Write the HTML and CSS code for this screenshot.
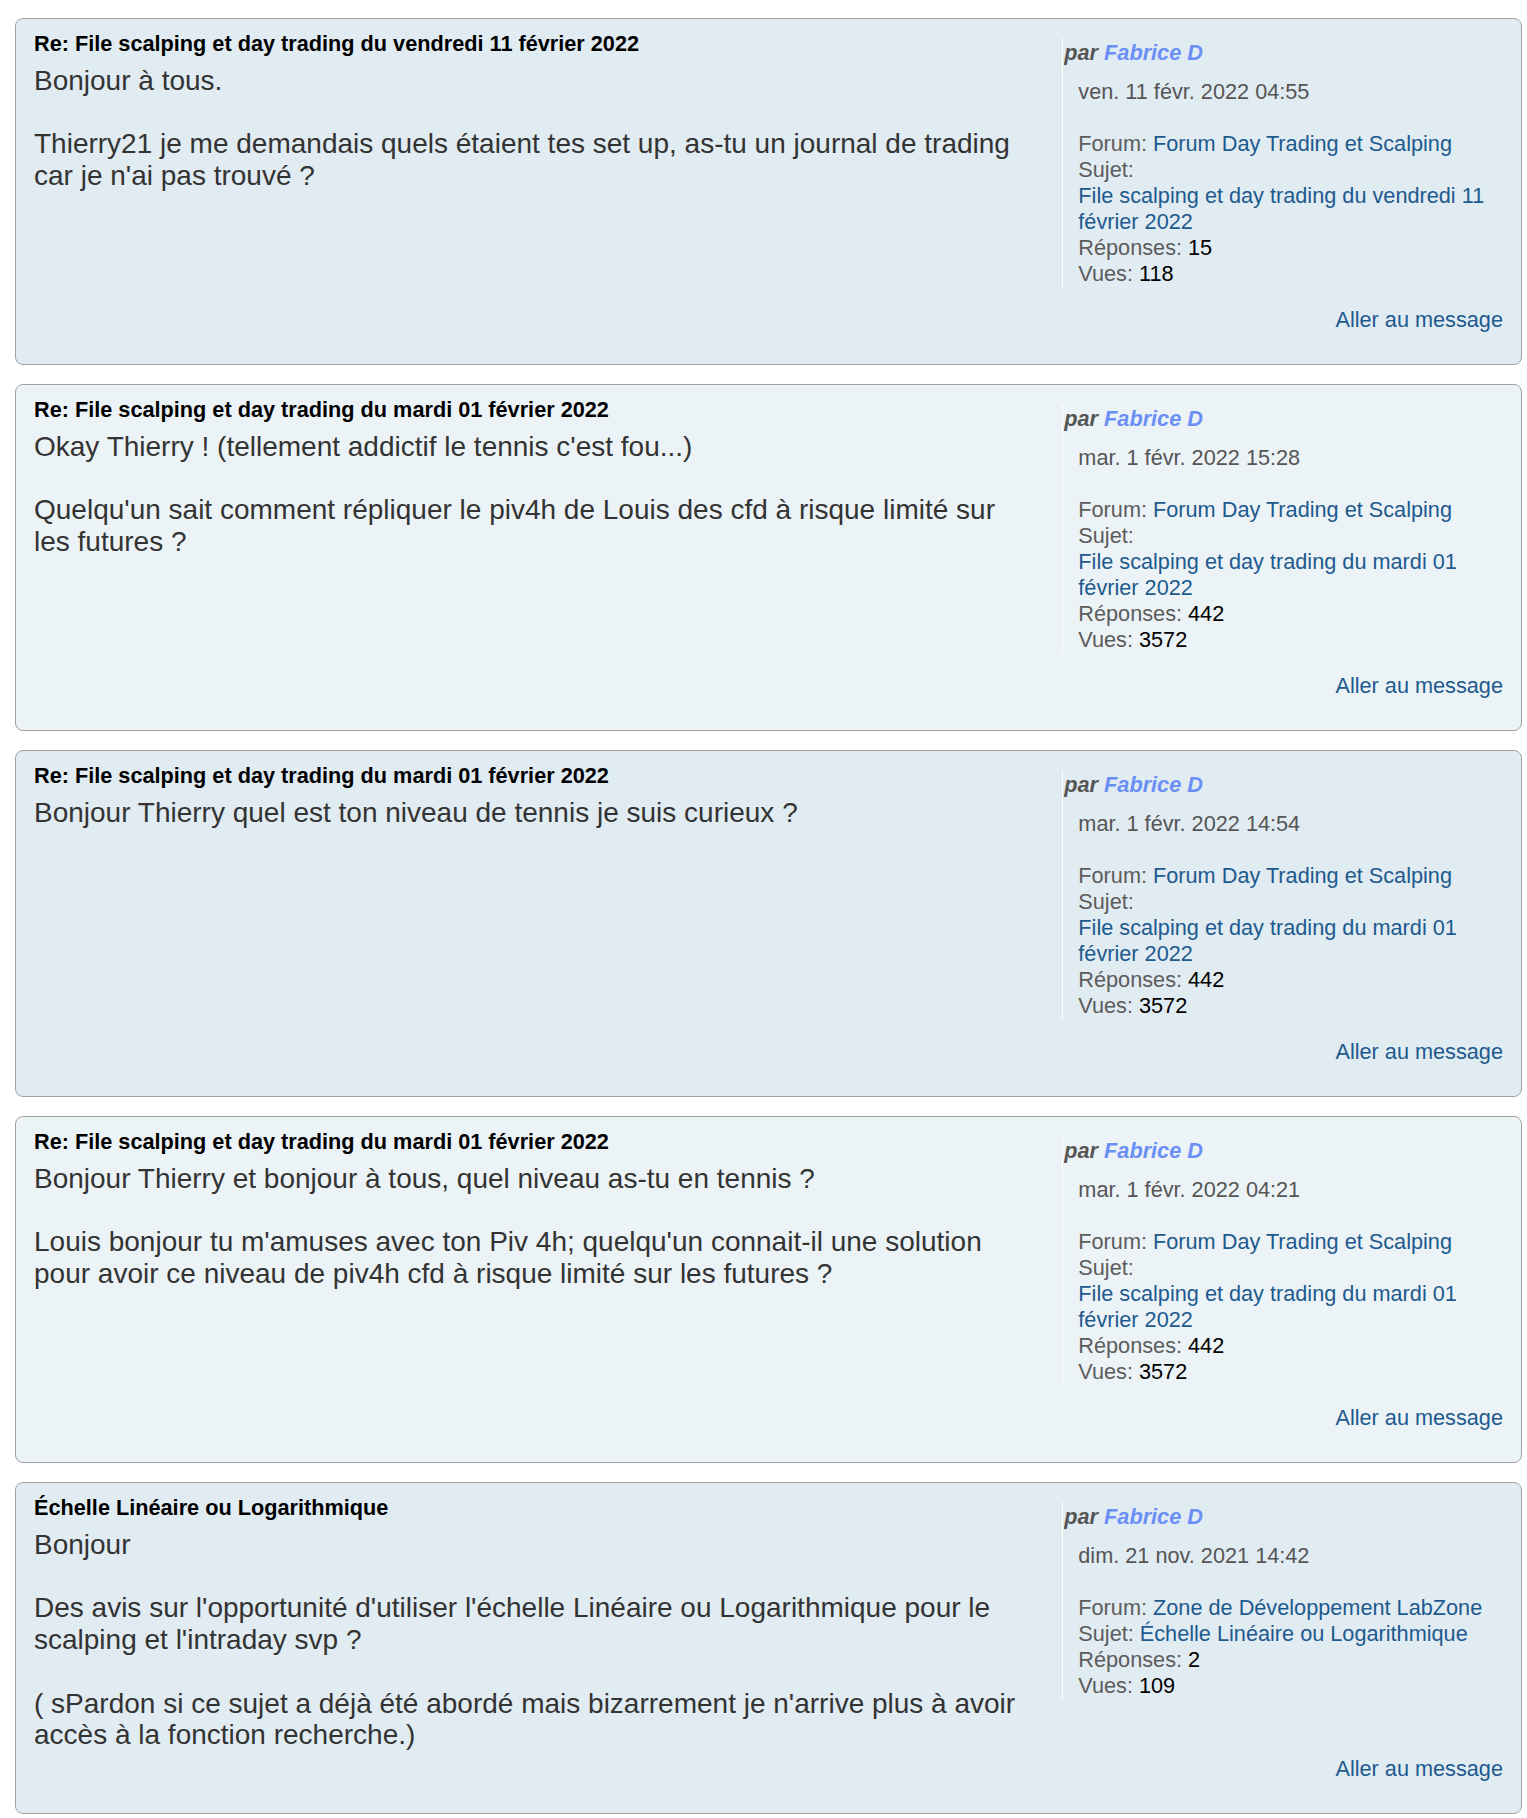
FILE: index.html
```html
<!DOCTYPE html>
<html lang="fr">

<head>
    <meta charset="UTF-8" />
    <title>Résultats de la recherche</title>
    <link rel="stylesheet" href="styles.css">
</head>

<body>
    <div class="results">

        <div class="post bg2">
            <div class="row">
                <div class="postbody">
                    <h3><a href="#">Re: File scalping et day trading du vendredi 11 février 2022</a></h3>
                    <div class="content">Bonjour à tous.<br><br>Thierry21 je me demandais quels étaient tes set up, as-tu un journal de trading car je n'ai pas trouvé ?</div>
                </div>
                <dl class="postprofile">
                    <dt class="author">par <a href="#" class="username">Fabrice D</a></dt>
                    <dd class="date">ven. 11 févr. 2022 04:55</dd>
                    <dd>&nbsp;</dd>
                    <dd>Forum: <a href="#">Forum Day Trading et Scalping</a></dd>
                    <dd>Sujet: <a href="#" class="topic">File scalping et day trading du vendredi 11 février 2022</a></dd>
                    <dd>Réponses: <strong>15</strong></dd>
                    <dd>Vues: <strong>118</strong></dd>
                </dl>
            </div>
            <div class="jump"><a href="#">Aller au message</a></div>
        </div>

        <div class="post bg1">
            <div class="row">
                <div class="postbody">
                    <h3><a href="#">Re: File scalping et day trading du mardi 01 février 2022</a></h3>
                    <div class="content">Okay Thierry ! (tellement addictif le tennis c'est fou...)<br><br>Quelqu'un sait comment répliquer le piv4h de Louis des cfd à risque limité sur les futures ?</div>
                </div>
                <dl class="postprofile">
                    <dt class="author">par <a href="#" class="username">Fabrice D</a></dt>
                    <dd class="date">mar. 1 févr. 2022 15:28</dd>
                    <dd>&nbsp;</dd>
                    <dd>Forum: <a href="#">Forum Day Trading et Scalping</a></dd>
                    <dd>Sujet: <a href="#" class="topic">File scalping et day trading du mardi 01 février 2022</a></dd>
                    <dd>Réponses: <strong>442</strong></dd>
                    <dd>Vues: <strong>3572</strong></dd>
                </dl>
            </div>
            <div class="jump"><a href="#">Aller au message</a></div>
        </div>

        <div class="post bg2">
            <div class="row">
                <div class="postbody">
                    <h3><a href="#">Re: File scalping et day trading du mardi 01 février 2022</a></h3>
                    <div class="content">Bonjour Thierry quel est ton niveau de tennis je suis curieux ?</div>
                </div>
                <dl class="postprofile">
                    <dt class="author">par <a href="#" class="username">Fabrice D</a></dt>
                    <dd class="date">mar. 1 févr. 2022 14:54</dd>
                    <dd>&nbsp;</dd>
                    <dd>Forum: <a href="#">Forum Day Trading et Scalping</a></dd>
                    <dd>Sujet: <a href="#" class="topic">File scalping et day trading du mardi 01 février 2022</a></dd>
                    <dd>Réponses: <strong>442</strong></dd>
                    <dd>Vues: <strong>3572</strong></dd>
                </dl>
            </div>
            <div class="jump"><a href="#">Aller au message</a></div>
        </div>

        <div class="post bg1">
            <div class="row">
                <div class="postbody">
                    <h3><a href="#">Re: File scalping et day trading du mardi 01 février 2022</a></h3>
                    <div class="content">Bonjour Thierry et bonjour à tous, quel niveau as-tu en tennis ?<br><br>Louis bonjour tu m'amuses avec ton Piv 4h; quelqu'un connait-il une solution pour avoir ce niveau de piv4h cfd à risque limité sur les futures ?</div>
                </div>
                <dl class="postprofile">
                    <dt class="author">par <a href="#" class="username">Fabrice D</a></dt>
                    <dd class="date">mar. 1 févr. 2022 04:21</dd>
                    <dd>&nbsp;</dd>
                    <dd>Forum: <a href="#">Forum Day Trading et Scalping</a></dd>
                    <dd>Sujet: <a href="#" class="topic">File scalping et day trading du mardi 01 février 2022</a></dd>
                    <dd>Réponses: <strong>442</strong></dd>
                    <dd>Vues: <strong>3572</strong></dd>
                </dl>
            </div>
            <div class="jump"><a href="#">Aller au message</a></div>
        </div>

        <div class="post bg2">
            <div class="row">
                <div class="postbody">
                    <h3><a href="#">Échelle Linéaire ou Logarithmique</a></h3>
                    <div class="content">Bonjour<br><br>Des avis sur l'opportunité d'utiliser l'échelle Linéaire ou Logarithmique pour le scalping et l'intraday svp ?<br><br>( sPardon si ce sujet a déjà été abordé mais bizarrement je n'arrive plus à avoir accès à la fonction recherche.)</div>
                </div>
                <dl class="postprofile">
                    <dt class="author">par <a href="#" class="username">Fabrice D</a></dt>
                    <dd class="date">dim. 21 nov. 2021 14:42</dd>
                    <dd>&nbsp;</dd>
                    <dd>Forum: <a href="#">Zone de Développement LabZone</a></dd>
                    <dd>Sujet: <a href="#" class="topic">Échelle Linéaire ou Logarithmique</a></dd>
                    <dd>Réponses: <strong>2</strong></dd>
                    <dd>Vues: <strong>109</strong></dd>
                </dl>
            </div>
            <div class="jump"><a href="#">Aller au message</a></div>
        </div>

    </div>
</body>

</html>
```

FILE: styles.css
```css
body {
    margin: 0;
    padding: 0;
    background: #fff;
    font-family: "Liberation Sans", Arial, sans-serif;
    color: #333;
}

a {
    color: #1d5a8e;
    text-decoration: none;
}

.results {
    padding: 18px 0 0 15px;
}

.post {
    width: 1507px;
    box-sizing: border-box;
    margin-bottom: 19px;
    padding: 12px 18px 31px;
    border: 1px solid #a0a0a0;
    border-radius: 8px;
}

.bg1 {
    background-color: #ecf3f7;
}

.bg2 {
    background-color: #e1ebf2;
}

.row {
    display: flex;
    justify-content: space-between;
    align-items: flex-start;
}

.postbody {
    width: 68%;
}

.postbody h3 {
    margin: 0;
    font-size: 21.7px;
    line-height: 26px;
    font-weight: bold;
}

.postbody h3 a {
    color: #000;
}

.content {
    margin-top: 8px;
    font-size: 28px;
    line-height: 31.7px;
    color: #333;
}

.postprofile {
    width: 30%;
    box-sizing: border-box;
    margin: 7px 0 15px;
    border-left: 1px solid #fff;
    font-size: 21.7px;
    line-height: 26px;
    color: #5c5c5c;
}

.postprofile dt {
    padding: 2px 0 0 1px;
    font-weight: bold;
    font-style: italic;
    color: #555;
}

.postprofile .username {
    color: #6a8ff5;
}

.postprofile dd {
    margin: 0 0 0 15px;
}

.postprofile .date {
    margin-top: 13px;
    color: #555;
}

.postprofile .topic {
    display: inline-block;
}

.postprofile strong {
    font-weight: normal;
    color: #000;
}

.jump {
    margin-top: 5px;
    text-align: right;
    font-size: 21.7px;
    line-height: 26px;
}
```
